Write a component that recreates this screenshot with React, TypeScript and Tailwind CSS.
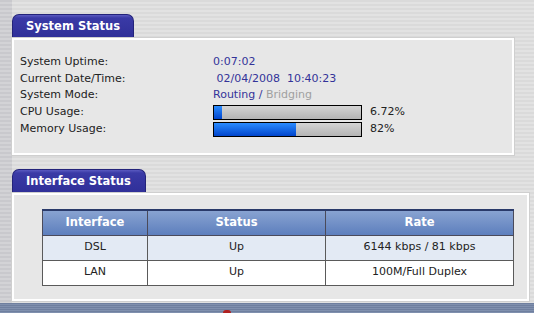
import React from 'react';

const font = "font-['Verdana','DejaVu_Sans',sans-serif]";

interface InfoRow {
  label: string;
  value: React.ReactNode;
}

function Tab({ title, width }: { title: string; width: string }) {
  return (
    <div
      className={`${width} h-[24px] rounded-t-[7px] border border-b-0 border-[#23237a] bg-[linear-gradient(#5a5ac0_0px,#3a3aa6_3px,#2f2f98_100%)] pl-[13px] pt-[3px] text-[11.5px] font-bold text-white`}
    >
      {title}
    </div>
  );
}

function Bar({ fill }: { fill: number }) {
  return (
    <div className="h-[15px] w-[149px] border border-black bg-[linear-gradient(#d4d4d4,#b4b4b4)]">
      <div
        className="h-full bg-[linear-gradient(#2a8cff,#0044cc)]"
        style={{ width: `${fill}px` }}
      />
    </div>
  );
}

export default function App() {
  const rows: InfoRow[] = [
    { label: 'System Uptime:', value: <span className="text-[#333399]">0:07:02</span> },
    {
      label: 'Current Date/Time:',
      value: <span className="text-[#333399] whitespace-pre"> 02/04/2008  10:40:23</span>,
    },
    {
      label: 'System Mode:',
      value: (
        <span className="text-[#333399]">
          Routing / <span className="text-[#a0a0a0]">Bridging</span>
        </span>
      ),
    },
  ];

  return (
    <div
      className={`${font} relative flex h-[313px] w-[534px] overflow-hidden bg-[repeating-linear-gradient(#dadada_0px,#dadada_2px,#e2e2e2_2px,#e2e2e2_4px)] text-[11px] text-[#222]`}
    >
      <div className="w-[12px] shrink-0 bg-[repeating-linear-gradient(#c9c9cd_0px,#c9c9cd_2px,#d3d3d6_2px,#d3d3d6_4px)]" />

      <div className="flex flex-col pt-[14px]">
        <Tab title="System Status" width="w-[122px]" />
        <div className="h-[117px] w-[502px] border-2 border-white bg-[#e7e7e7] pl-[6px] pt-[14px] outline outline-1 outline-[#cfcfcf]">
          {rows.map(r => (
            <div key={r.label} className="flex h-[16.5px] items-center">
              <div className="w-[193px]">{r.label}</div>
              <div>{r.value}</div>
            </div>
          ))}
          <div className="flex h-[17px] items-center">
            <div className="w-[193px]">CPU Usage:</div>
            <Bar fill={8} />
            <div className="ml-[8px]">6.72%</div>
          </div>
          <div className="flex h-[17px] items-center">
            <div className="w-[193px]">Memory Usage:</div>
            <Bar fill={82} />
            <div className="ml-[8px]">82%</div>
          </div>
        </div>

        <div className="mt-[14px]">
          <Tab title="Interface Status" width="w-[134px]" />
        </div>
        <div className="h-[108px] w-[517px] border-2 border-white bg-[#e7e7e7] pl-[28px] pt-[14px] outline outline-1 outline-[#cfcfcf]">
          <table className="w-[472px] border-collapse text-center">
            <thead>
              <tr className="h-[25px] bg-[linear-gradient(#8aa4d2,#5d7fbd)] text-[11.5px] font-bold text-white">
                <th className="w-[105px] border border-t-2 border-[#4a4a5a] border-t-[#2a3a6a]">Interface</th>
                <th className="w-[178px] border border-t-2 border-[#4a4a5a] border-t-[#2a3a6a]">Status</th>
                <th className="border border-t-2 border-[#4a4a5a] border-t-[#2a3a6a]">Rate</th>
              </tr>
            </thead>
            <tbody>
              <tr className="h-[25px] bg-[#e3eaf4]">
                <td className="border border-[#5a5a5a]">DSL</td>
                <td className="border border-[#5a5a5a]">Up</td>
                <td className="border border-[#5a5a5a]">6144 kbps / 81 kbps</td>
              </tr>
              <tr className="h-[25px] bg-white">
                <td className="border border-[#5a5a5a]">LAN</td>
                <td className="border border-[#5a5a5a]">Up</td>
                <td className="border border-[#5a5a5a]">100M/Full Duplex</td>
              </tr>
            </tbody>
          </table>
        </div>
      </div>

      <div className="absolute bottom-0 left-0 h-[10px] w-full bg-[repeating-linear-gradient(#6f7f9f_0px,#6f7f9f_1px,#8090ae_1px,#8090ae_2px)]">
        <div className="absolute bottom-0 left-[223px] h-[3px] w-[8px] rounded-t-full bg-[#b02020]" />
      </div>
    </div>
  );
}
